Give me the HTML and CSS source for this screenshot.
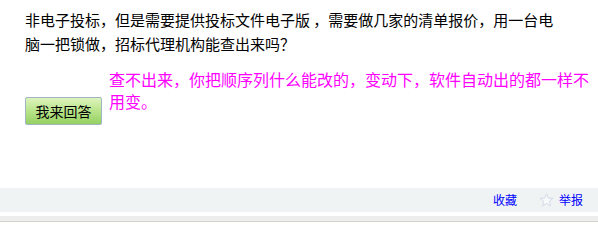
FILE: index.html
```html
<!DOCTYPE html>
<html lang="zh">
<head>
<meta charset="utf-8">
<link rel="stylesheet" href="styles.css">
</head>
<body>
<div class="page">
  <div class="content">
    <p class="question">非电子投标，但是需要提供投标文件电子版 ，需要做几家的清单报价，用一台电脑一把锁做，招标代理机构能查出来吗？</p>
    <div class="answer-row">
      <button class="answer-btn">我来回答</button>
      <p class="answer">查不出来，你把顺序列什么能改的，变动下，软件自动出的都一样不用变。</p>
    </div>
  </div>
  <div class="toolbar">
    <a class="link" href="#">收藏</a>
    <span class="star">
      <svg width="15" height="14" viewBox="0 0 15 14"><path d="M7.5 0.8 L9.3 5 L13.9 5.3 L10.4 8.3 L11.5 12.9 L7.5 10.5 L3.5 12.9 L4.6 8.3 L1.1 5.3 L5.7 5 Z" fill="#f7f9fb" stroke="#d3dbe6" stroke-width="1"/></svg>
    </span>
    <a class="link" href="#">举报</a>
  </div>
  <div class="gap"></div>
  <div class="bottom-bar"></div>
</div>
</body>
</html>
```
FILE: styles.css
```css
html, body {
  margin: 0;
  padding: 0;
  background: #ffffff;
}
.page {
  width: 598px;
  font-family: "Noto Sans CJK SC", "Liberation Sans", sans-serif;
  font-size: 15px;
}
.content {
  height: 188px;
  padding: 8px 0 0 25px;
  box-sizing: border-box;
}
.question {
  margin: 0;
  line-height: 24px;
  font-size: 15px;
  color: #000000;
  width: 540px;
}
.answer-row {
  display: flex;
  align-items: flex-start;
  margin-top: 12px;
}
.answer-btn {
  margin-top: 29px;
  width: 77px;
  height: 28px;
  padding: 0;
  border: 1px solid #9fb7c4;
  border-radius: 2px;
  background: linear-gradient(to bottom, #def3be 0%, #b9e48a 50%, #95d062 100%);
  font-family: "Noto Sans CJK SC", sans-serif;
  font-size: 14px;
  color: #000000;
  flex-shrink: 0;
}
.answer {
  margin: 0 0 0 7px;
  width: 485px;
  line-height: 22px;
  color: #ff00ff;
  font-size: 16px;
}
.toolbar {
  height: 24px;
  background: #eff3f4;
  display: flex;
  justify-content: flex-end;
  align-items: center;
  padding-right: 15px;
}
.link {
  color: #0000ff;
  text-decoration: none;
  font-size: 12px;
  line-height: 24px;
}
.star {
  display: flex;
  margin: 0 5px 0 22px;
}
.gap {
  height: 4px;
}
.bottom-bar {
  height: 5px;
  background: #eeeeee;
  border-bottom: 1px solid #d4d4cc;
}
```
